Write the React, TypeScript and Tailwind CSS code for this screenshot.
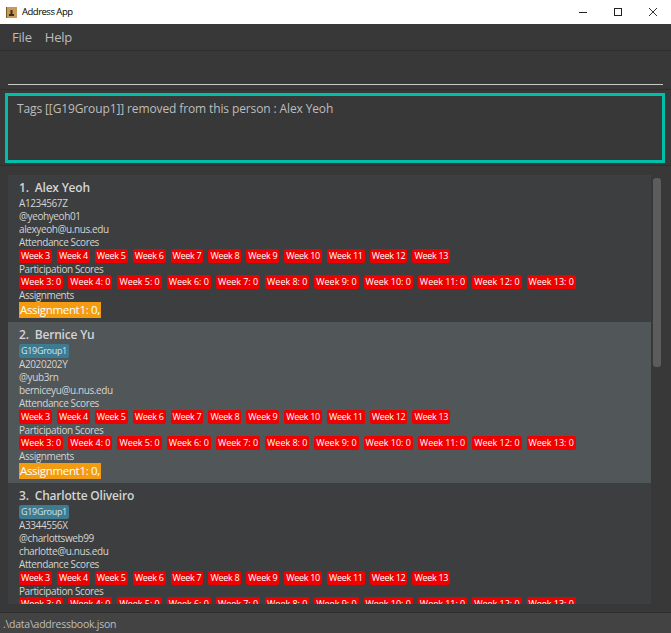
const font = { fontFamily: '"Open Sans", sans-serif' };

const attendance = ["Week 3", "Week 4", "Week 5", "Week 6", "Week 7", "Week 8", "Week 9", "Week 10", "Week 11", "Week 12", "Week 13"];
const participation = attendance.map((w) => `${w}: 0`);

function AttendanceTags() {
  return (
    <div className="flex h-[14px] gap-[5px]">
      {attendance.map((t) => (
        <span key={t} className="flex h-[14px] items-center rounded-[2px] bg-[#ee0000] px-[2px] pb-[1px] text-[9px] leading-none tracking-[-0.29px] text-white">
          {t}
        </span>
      ))}
    </div>
  );
}

function ParticipationTags() {
  return (
    <div className="flex h-[14px] gap-[5px]">
      {participation.map((t) => (
        <span key={t} className="flex h-[14px] items-center rounded-[2px] bg-[#ee0000] px-[2px] pb-[1px] text-[9px] leading-none tracking-[-0.03px] text-white">
          {t}
        </span>
      ))}
    </div>
  );
}

function Line({ children }: { children: string }) {
  return <div className="h-[13px] text-[10px] leading-[13px] tracking-[-0.4px] text-[#d4d4d4]">{children}</div>;
}

type P = { n: number; name: string; id: string; tg: string; email: string; group?: boolean; alt?: boolean };

function Card({ n, name, id, tg, email, group, alt }: P) {
  return (
    <div className={`pl-[11px] ${alt ? "bg-[#515658]" : "bg-[#3c3e3f]"}`}>
      <div className="flex h-[22px] items-center gap-[6px] pt-[4px] text-[12px] font-semibold tracking-[-0.2px] text-[#d4d4d4]">
        <span>{n}.</span>
        <span>{name}</span>
      </div>
      {group && (
        <div className="flex h-[14px]">
          <span className="flex items-center rounded-[2px] bg-[#3e7b91] px-[2px] pb-[1px] text-[9px] leading-none tracking-[-0.3px] text-[#d0e4ea]">G19Group1</span>
        </div>
      )}
      <Line>{id}</Line>
      <Line>{tg}</Line>
      <Line>{email}</Line>
      <Line>Attendance Scores</Line>
      <AttendanceTags />
      <div className="h-[12px] text-[10px] leading-[12px] tracking-[-0.4px] text-[#d4d4d4]">Participation Scores</div>
      <ParticipationTags />
      <Line>Assignments</Line>
      <div className="flex h-[20px] items-start">
        <span className="flex h-[16px] items-center bg-[#f39c12] px-[1px] text-[11.5px] leading-none tracking-[-0.33px] text-white">Assignment1: 0,</span>
      </div>
    </div>
  );
}

export default function App() {
  return (
    <div className="flex h-[633px] w-[671px] flex-col overflow-hidden bg-[#383838]" style={font}>
      {/* title bar */}
      <div className="flex h-[24px] shrink-0 items-center bg-white pl-[6px] text-black">
        <svg width="11" height="11" viewBox="0 0 11 11" className="shrink-0">
          <rect width="11" height="11" fill="#c79a5b" />
          <rect x="0" y="0" width="1" height="11" fill="#7a5a30" />
          <rect x="3" y="7" width="5" height="2" fill="#3f2b12" />
          <rect x="4.5" y="3" width="2" height="4" fill="#3f2b12" />
        </svg>
        <span className="ml-[5px] text-[9.5px] tracking-[-0.5px]">Address App</span>
        <div className="ml-auto flex items-center">
          <svg width="10" height="10" viewBox="0 0 10 10" className="mr-[25px]"><path d="M1 5.5h8" stroke="#222" strokeWidth="1" /></svg>
          <svg width="10" height="10" viewBox="0 0 10 10" className="mr-[25px]"><rect x="1.5" y="1.5" width="7" height="7" fill="none" stroke="#222" strokeWidth="1" /></svg>
          <svg width="10" height="10" viewBox="0 0 10 10" className="mr-[13px]"><path d="M1 1l8 8M9 1l-8 8" stroke="#333" strokeWidth="1" /></svg>
        </div>
      </div>

      {/* menu */}
      <div className="flex h-[27px] shrink-0 items-center gap-[13px] border-b border-[#2e2e2e] pl-[12px] pt-[2px] text-[13px] tracking-[-0.2px] text-[#bdbdbd]">
        <span>File</span>
        <span>Help</span>
      </div>

      {/* command box */}
      <div className="flex h-[39px] shrink-0 flex-col justify-end border-b border-[#2e2e2e] px-[8px] pb-[4px]">
        <div className="h-[1px] bg-[#c8c8c8]" />
      </div>

      {/* result */}
      <div className="flex h-[76px] shrink-0 flex-col border-b border-[#2e2e2e] px-[5px] pt-[3px]">
        <div className="h-[70px] w-[660px] border-[3px] border-[#00bfa8] px-[9px] py-[5px] text-[12px] leading-[16px] tracking-[-0.12px] text-[#bdbdbd]">
          Tags [[G19Group1]] removed from this person : Alex Yeoh
        </div>
      </div>

      {/* list */}
      <div className="flex min-h-0 flex-1 pl-[8px] pt-[9px]">
        <div className="h-[429px] w-[643px] overflow-hidden bg-[#3c3e3f]">
          <Card n={1} name="Alex Yeoh" id="A1234567Z" tg="@yeohyeoh01" email="alexyeoh@u.nus.edu" />
          <Card n={2} name="Bernice Yu" id="A2020202Y" tg="@yub3rn" email="berniceyu@u.nus.edu" group alt />
          <Card n={3} name="Charlotte Oliveiro" id="A3344556X" tg="@charlottsweb99" email="charlotte@u.nus.edu" group />
        </div>
        <div className="ml-[2px] mt-[3px] h-[189px] w-[8px] rounded-[3px] bg-[#5c5c5c]" />
      </div>

      {/* status */}
      <div className="flex h-[21px] shrink-0 items-center border-t border-[#2e2e2e] bg-[#434343] pl-[3px] pt-[4px] text-[10.5px] tracking-[-0.25px] text-[#bdbdbd]">
        .\data\addressbook.json
      </div>
    </div>
  );
}
